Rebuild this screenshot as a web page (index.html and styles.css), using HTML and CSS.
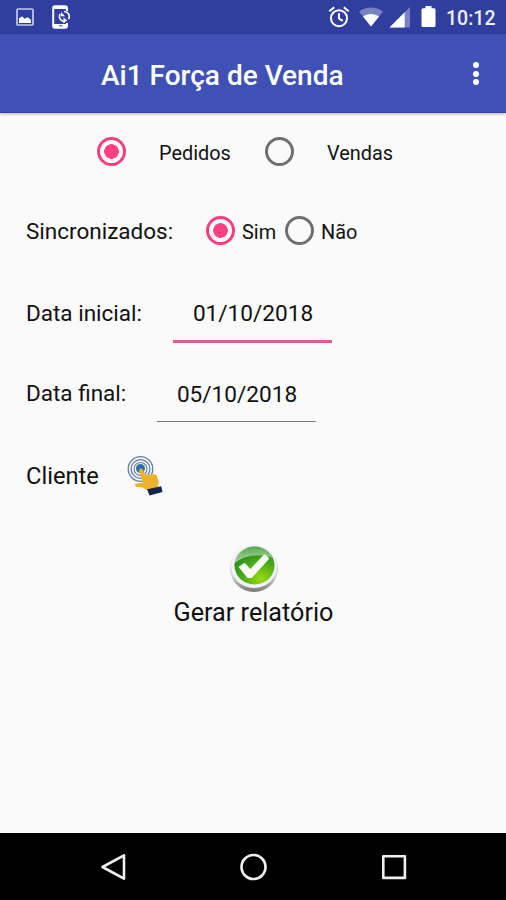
FILE: index.html
```html
<!DOCTYPE html>
<html lang="pt-BR">
<head>
  <meta charset="UTF-8">
  <meta name="viewport" content="width=device-width, initial-scale=1.0">
  <title>Ai1 Força de Venda</title>
  <link rel="stylesheet" href="styles.css">
</head>
<body>
  <div class="status-bar">
    <svg class="icon-photo" width="18" height="18" viewBox="0 0 18 18">
      <rect x="1" y="1" width="16" height="16" rx="1" fill="none" stroke="#c5caec" stroke-width="1.7"/>
      <path d="M3 15v-4.500l3-2.300 2.500 2.500 3.300-1.500L15 12v3z" fill="#fff"/>
    </svg>
    <svg class="icon-phone" width="19" height="24" viewBox="0 0 19 24">
      <path d="M15 6V3a1.8 1.8 0 0 0-1.8-1.8H3A1.8 1.8 0 0 0 1.2 3v18A1.8 1.8 0 0 0 3 22.8h10.2A1.8 1.8 0 0 0 15 21v-3" fill="none" stroke="#fff" stroke-width="2"/>
      <path d="M1.500 1.500h13.300v2.500H1.500zM1.500 19h13.300v3.500H1.500z" fill="#fff"/>
      <path d="M7 20.800h3.500" stroke="#303f9f" stroke-width="1"/>
      <path d="M8.200 9a5 5 0 0 0 4 7.600M12 6.500a5 5 0 0 1 4.500 7.600" fill="none" stroke="#fff" stroke-width="1.600"/>
      <path d="M9 7v4.300h4zM11.500 18.500l3.600-3.300-3.600-2.700z" fill="#fff"/>
    </svg>
    <div class="status-right">
      <svg class="icon-alarm" width="22" height="22" viewBox="0 0 22 22" fill="none" stroke="#fff" stroke-width="2">
        <circle cx="11" cy="12.200" r="8"/>
        <path d="M1.300 5.300L6.200 1.300M20.700 5.300l-4.900-4M11 7.300v5.200l3.700 2.300"/>
      </svg>
      <svg class="icon-wifi" width="26" height="20" viewBox="0 0 26 20">
        <path d="M1 4.500C8 -1 18 -1 25 4.500L13 19.500z" fill="#fff" opacity=".35"/>
        <path d="M5 9.500C9.500 6 16.500 6 21 9.500L13 19.500z" fill="#fff"/>
      </svg>
      <svg class="icon-signal" width="21" height="21" viewBox="0 0 21 21">
        <path d="M21 0v20.500H.5z" fill="#fff" opacity=".35"/>
        <path d="M15.700 5.200v15.300H.5z" fill="#fff"/>
      </svg>
      <svg class="icon-battery" width="15" height="22" viewBox="0 0 15 22">
        <path d="M4.500 0h6v2.300H13A1.500 1.500 0 0 1 14.500 3.800v15.700A1.500 1.500 0 0 1 13 21H2A1.500 1.500 0 0 1 .5 19.500V3.800A1.500 1.500 0 0 1 2 2.300h2.500z" fill="#fff"/>
      </svg>
      <span class="clock">10:12</span>
    </div>
  </div>

  <header class="toolbar">
    <h1 class="title">Ai1 Força de Venda</h1>
    <div class="menu">
      <span class="dot"></span>
      <span class="dot"></span>
      <span class="dot"></span>
    </div>
  </header>

  <main class="content">
    <div class="row row-type">
      <span class="radio checked"></span>
      <span class="option option-pedidos">Pedidos</span>
      <span class="radio"></span>
      <span class="option option-vendas">Vendas</span>
    </div>

    <div class="row row-sync">
      <span class="label label-sync">Sincronizados:</span>
      <span class="radio checked"></span>
      <span class="option option-sim">Sim</span>
      <span class="radio"></span>
      <span class="option option-nao">Não</span>
    </div>

    <div class="row row-start">
      <span class="label label-start">Data inicial:</span>
      <span class="date active">01/10/2018</span>
    </div>

    <div class="row row-end">
      <span class="label label-end">Data final:</span>
      <span class="date">05/10/2018</span>
    </div>

    <div class="row row-client">
      <span class="label label-client">Cliente</span>
      <svg width="36" height="40" viewBox="0 0 36 40">
        <g fill="none" stroke="#6580a8">
          <circle cx="13.500" cy="13" r="12.300" stroke-width="1.300" fill="#f1f5fa"/>
          <circle cx="13.500" cy="13" r="9.400" stroke-width="1.300"/>
          <circle cx="13.500" cy="13" r="6.500" stroke-width="1.100"/>
        </g>
        <circle cx="13.500" cy="12.500" r="4.500" fill="#2d70a8"/>
        <path d="M12.500 13.300c1-1.100 2.500-.9 3.100.3l2.900 5.200 8.500-.6c1.400 0 2.500.8 3 2l1.800 6.300-.8 4.600-11.300 2.800-4.200-2.500-6.500-.6c-1.400-.6-1.200-2.900.3-3.200l6.700-.8-3.800-11.600c-.2-.7-.2-1.400.3-1.900z" fill="#edb32d"/>
        <path d="M20 33.300L34.200 30.200 35.500 36 22.500 39.500z" fill="#11254d"/>
      </svg>
    </div>

    <div class="report">
      <svg width="50" height="50" viewBox="0 0 50 50">
        <defs>
          <linearGradient id="rim" x1="0" y1="0" x2="0" y2="1">
            <stop offset="0" stop-color="#d5d9d3"/>
            <stop offset=".65" stop-color="#d8d8d8"/>
            <stop offset="1" stop-color="#777"/>
          </linearGradient>
          <radialGradient id="green" cx=".65" cy=".85" r=".8">
            <stop offset="0" stop-color="#9bdc12"/>
            <stop offset=".55" stop-color="#4aac17"/>
            <stop offset="1" stop-color="#268a1c"/>
          </radialGradient>
          <linearGradient id="gloss" x1="0" y1="0" x2="0" y2="1">
            <stop offset="0" stop-color="#fff" stop-opacity=".25"/>
            <stop offset="1" stop-color="#fff" stop-opacity=".6"/>
          </linearGradient>
        </defs>
        <ellipse cx="25" cy="25.500" rx="24" ry="23.500" fill="url(#rim)"/>
        <ellipse cx="25" cy="23.300" rx="23" ry="21.700" fill="#f2f3f2"/>
        <ellipse cx="25.500" cy="22.500" rx="20" ry="19" fill="url(#green)"/>
        <path d="M5.800 20C7 9 15.500 3.700 25.500 3.700c8 0 15 4 18 11C31 10 16 12 5.800 20z" fill="url(#gloss)"/>
        <path d="M10.500 24l5-3.500 5.700 6.500L35.500 11.800l4 3.700L22.300 34.500h-3.300z" fill="#f8faf6" stroke="#f8faf6" stroke-width="1.200" stroke-linejoin="round"/>
      </svg>
      <span class="report-label">Gerar relatório</span>
    </div>
  </main>

  <nav class="nav-bar">
    <svg width="28" height="28" viewBox="0 0 28 28" fill="none" stroke="#f0f0f0" stroke-width="2.600" stroke-linejoin="round">
      <path d="M25 2.300v23.400L3.500 14z"/>
    </svg>
    <svg width="28" height="28" viewBox="0 0 28 28" fill="none" stroke="#f0f0f0" stroke-width="2.600">
      <circle cx="13.500" cy="14" r="12"/>
    </svg>
    <svg width="28" height="28" viewBox="0 0 28 28" fill="none" stroke="#f0f0f0" stroke-width="2.600" stroke-linejoin="round">
      <rect x="3.300" y="3.300" width="21.600" height="21.600"/>
    </svg>
  </nav>
</body>
</html>
```
FILE: styles.css
```css
* {
  box-sizing: border-box;
}

body {
  font-family: Roboto, 'Liberation Sans', sans-serif;
  background-color: #fafafa;
  color: #111;
  margin: 0;
  height: 900px;
  display: flex;
  flex-direction: column;
  overflow: hidden;
  white-space: nowrap;
}

svg {
  display: block;
  flex: none;
}

.status-bar {
  height: 34px;
  flex: none;
  display: flex;
  align-items: center;
  padding: 0 10px 0 16px;
  background-color: #303f9f;
}

.icon-phone {
  margin-left: 18px;
}

.status-right {
  display: flex;
  align-items: center;
  margin-left: auto;
}

.icon-wifi {
  margin-left: 8px;
}

.icon-signal {
  margin-left: 5px;
}

.icon-battery {
  margin-left: 11px;
}

.clock {
  width: 50px;
  margin-left: 10px;
  font-size: 19.5px;
  font-weight: 500;
  line-height: 34px;
  color: #f0f1fa;
  padding-top: 3px;
}

.toolbar {
  height: 79px;
  flex: none;
  display: flex;
  align-items: center;
  justify-content: space-between;
  padding: 0 27px 0 101px;
  background-color: #3f51b5;
  border-bottom: 1px solid #34449c;
  box-shadow: 0 1px 3px rgba(0, 0, 0, 0.3);
}

.title {
  margin: 0;
  padding-top: 4px;
  font-size: 28px;
  font-weight: 500;
  color: #fff;
}

.menu {
  display: flex;
  flex-direction: column;
  gap: 2.5px;
  padding-top: 1px;
}

.dot {
  width: 6px;
  height: 6px;
  border-radius: 50%;
  background-color: #fff;
}

.content {
  flex: 1;
  padding-top: 13px;
}

.row {
  display: flex;
  align-items: center;
  padding-left: 26px;
}

.row-type {
  height: 50px;
  padding-left: 97px;
}

.row-sync {
  height: 50px;
  margin-top: 29px;
}

.row-start {
  height: 60px;
  margin-top: 28px;
}

.row-end {
  height: 58px;
  margin-top: 21px;
}

.row-client {
  height: 60px;
  margin-top: 24px;
}

.radio {
  flex: none;
  width: 29px;
  height: 29px;
  border: 3px solid #6f6f6f;
  border-radius: 50%;
}

.radio.checked {
  border-color: #f43f7d;
  background: radial-gradient(circle, #ff4081 7px, transparent 7.5px);
}

.option {
  font-size: 19.9px;
  padding-top: 4px;
}

.option-pedidos {
  width: 106px;
  margin-left: 33px;
}

.option-vendas {
  margin-left: 33px;
}

.option-sim {
  width: 43px;
  margin-left: 7px;
}

.option-nao {
  margin-left: 7px;
}

.label {
  font-size: 22.5px;
}

.label-sync {
  width: 180px;
  padding-top: 2px;
}

.label-start {
  width: 147px;
  padding-bottom: 1px;
}

.label-end {
  width: 131px;
}

.label-client {
  width: 101px;
  font-size: 23.7px;
}

.date {
  width: 159px;
  height: 60px;
  padding-left: 1px;
  font-size: 22.6px;
  line-height: 61px;
  text-align: center;
}

.date.active {
  border-bottom: 3px solid #e35b8e;
}

.row-end .date {
  height: 58px;
  border-bottom: 1px solid #777;
}

.report {
  display: flex;
  flex-direction: column;
  align-items: center;
  margin-top: 37px;
  padding-left: 1px;
}

.report-label {
  font-size: 25.2px;
  line-height: 40px;
}

.nav-bar {
  height: 67px;
  flex: none;
  display: flex;
  align-items: center;
  justify-content: space-between;
  padding: 0 98px 0 99px;
  background-color: #000;
}
```
